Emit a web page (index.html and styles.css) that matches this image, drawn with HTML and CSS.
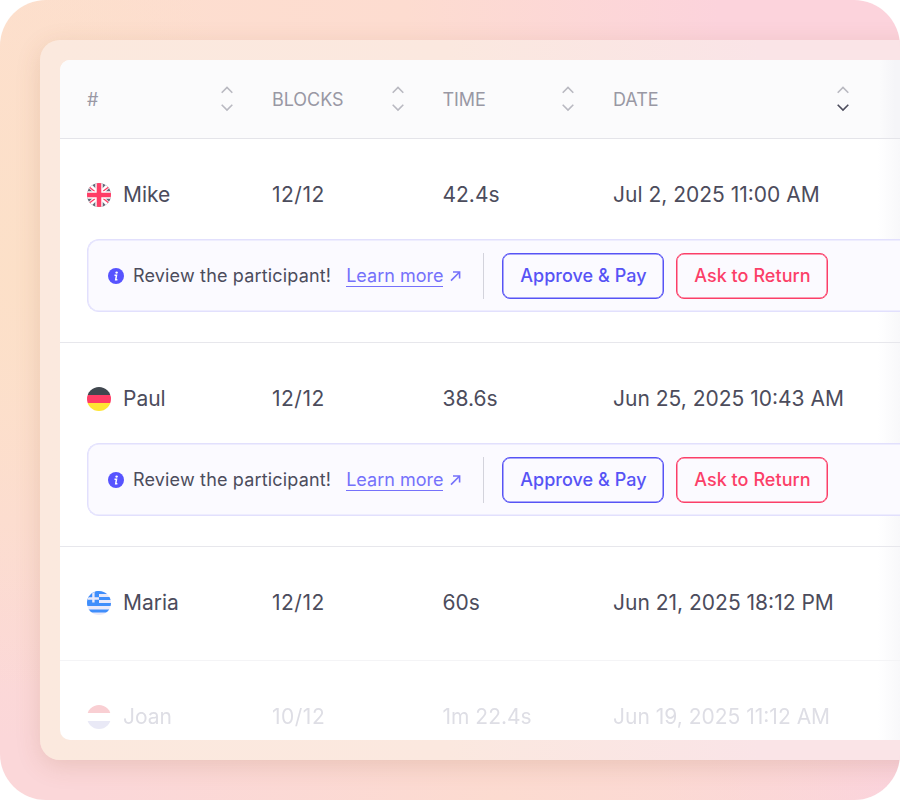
FILE: index.html
```
<!DOCTYPE html>
<html lang="en">
  <head>
    <meta charset="UTF-8" />
    <meta name="viewport" content="width=device-width, initial-scale=1.0" />
    <title>Participants</title>
    <link rel="stylesheet" href="styles.css">
  </head>
  <body>
    <svg class="defs" width="0" height="0" aria-hidden="true">
      <symbol id="info" viewBox="0 0 16 16">
        <circle cx="8" cy="8" r="8" fill="#5753ff"/>
        <circle cx="8.6" cy="4.6" r="1.2" fill="#fff"/>
        <path d="M6.5 7.3H8.5L7.7 11.8H9.4" fill="none" stroke="#fff" stroke-width="1.5"/>
      </symbol>
      <symbol id="arrow" viewBox="0 0 12 12">
        <path d="M1 10.6 9.4 2.2M3 2H9.6V8.6" fill="none" stroke="#7571fb" stroke-width="1.6"/>
      </symbol>
      <clipPath id="round"><circle cx="12" cy="12" r="12"/></clipPath>
    </svg>

    <main class="scene">
      <div class="frame">
        <div class="table">
          <div class="grid head">
            <div class="th">#
              <svg class="sort" viewBox="0 0 14 26"><path d="M1.7 6.7 7 1.4 12.3 6.7"/><path class="down" d="M1.7 18.7 7 24 12.3 18.7"/></svg>
            </div>
            <div class="th">BLOCKS
              <svg class="sort" viewBox="0 0 14 26"><path d="M1.7 6.7 7 1.4 12.3 6.7"/><path class="down" d="M1.7 18.7 7 24 12.3 18.7"/></svg>
            </div>
            <div class="th">TIME
              <svg class="sort" viewBox="0 0 14 26"><path d="M1.7 6.7 7 1.4 12.3 6.7"/><path class="down" d="M1.7 18.7 7 24 12.3 18.7"/></svg>
            </div>
            <div class="th">DATE
              <svg class="sort desc" viewBox="0 0 14 26"><path d="M1.7 6.7 7 1.4 12.3 6.7"/><path class="down" d="M1.7 18.7 7 24 12.3 18.7"/></svg>
            </div>
          </div>

          <section class="row">
            <div class="grid">
              <div class="name">
                <svg class="flag" viewBox="0 0 24 24"><g clip-path="url(#round)">
                  <path fill="#666879" d="M0 0h24v24H0z"/>
                  <path stroke="#fff" stroke-width="4.6" d="M0 0 24 24M24 0 0 24"/>
                  <path stroke="#ff3d66" stroke-width="1.3" d="M1 3 9 9.5M15 9 23 3M1 21 9 15M15 14.5 23 21"/>
                  <path stroke="#fff" stroke-width="7.4" d="M12 0V24M0 12H24"/>
                  <path stroke="#ff3d66" stroke-width="4.6" d="M12 0V24M0 12H24"/>
                </g></svg>
                Mike
              </div>
              <div class="blocks">12/12</div>
              <div>42.4s</div>
              <div>Jul 2, 2025 11:00 AM</div>
            </div>
            <div class="review">
              <svg class="info"><use href="#info"/></svg>
              <span class="message">Review the participant!</span>
              <a class="learn" href="#">Learn more</a>
              <svg class="arrow"><use href="#arrow"/></svg>
              <div class="actions">
                <button class="approve">Approve &amp; Pay</button>
                <button class="return">Ask to Return</button>
              </div>
            </div>
          </section>

          <section class="row">
            <div class="grid">
              <div class="name">
                <svg class="flag" viewBox="0 0 24 24"><g clip-path="url(#round)">
                  <path fill="#40474f" d="M0 0h24v8H0z"/>
                  <path fill="#ff3d66" d="M0 8h24v8H0z"/>
                  <path fill="#ffe633" d="M0 16h24v8H0z"/>
                </g></svg>
                Paul
              </div>
              <div class="blocks">12/12</div>
              <div>38.6s</div>
              <div>Jun 25, 2025 10:43 AM</div>
            </div>
            <div class="review">
              <svg class="info"><use href="#info"/></svg>
              <span class="message">Review the participant!</span>
              <a class="learn" href="#">Learn more</a>
              <svg class="arrow"><use href="#arrow"/></svg>
              <div class="actions">
                <button class="approve">Approve &amp; Pay</button>
                <button class="return">Ask to Return</button>
              </div>
            </div>
          </section>

          <section class="row short">
            <div class="grid">
              <div class="name">
                <svg class="flag" viewBox="0 0 24 24"><g clip-path="url(#round)">
                  <path fill="#e9e9fa" d="M0 0h24v24H0z"/>
                  <path stroke="#3f8efb" stroke-width="3" d="M0 1.5H24M0 7.5H24M0 13.5H24M0 20H24"/>
                  <path fill="#3f8efb" d="M0 0h12v12H0z"/>
                  <path stroke="#e9e9fa" stroke-width="2.4" d="M6.4 0V11.5M0 7.5H12"/>
                </g></svg>
                Maria
              </div>
              <div class="blocks">12/12</div>
              <div>60s</div>
              <div>Jun 21, 2025 18:12 PM</div>
            </div>
          </section>

          <section class="row faded">
            <div class="grid">
              <div class="name">
                <svg class="flag" viewBox="0 0 24 24"><g clip-path="url(#round)">
                  <path fill="#f9cfd3" d="M0 0h24v8H0z"/>
                  <path fill="#e9e9f6" d="M0 16h24v8H0z"/>
                </g></svg>
                Joan
              </div>
              <div class="blocks">10/12</div>
              <div>1m 22.4s</div>
              <div>Jun 19, 2025 11:12 AM</div>
            </div>
          </section>
        </div>
      </div>
    </main>
  </body>
</html>
```
FILE: styles.css
```
* {
  box-sizing: border-box;
}

body {
  margin: 0;
  background: #fff;
  font-family: Inter, sans-serif;
  color: #4c4c5c;
}

.defs {
  position: absolute;
}

.scene {
  height: 800px;
  padding: 40px 0 40px 40px;
  overflow: hidden;
  border-radius: 46px;
  background:
    radial-gradient(ellipse 240px 420px at 20px 270px, #fce0c8 0, rgba(252,224,200,0) 100%),
    radial-gradient(ellipse 420px 200px at 500px 800px, #fcdbd0 0, rgba(252,219,208,0) 100%),
    linear-gradient(90deg, #fddfcf 0, #fddcd0 45%, #fcd3dc 80%) 0 0 / 100% 300px no-repeat,
    linear-gradient(90deg, rgba(251,211,221,0) 70%, #fbd3dd),
    linear-gradient(#fddfcf 300px, #fbd7d9 740px);
}

.frame {
  width: 900px;
  height: 720px;
  padding: 20px;
  border-radius: 20px;
  background: linear-gradient(90deg, #fbe9de 0, #fbe8df 45%, #fae4e7 80%);
  box-shadow: 0 6px 24px rgba(150, 90, 50, .17);
}

.table {
  height: 680px;
  overflow: hidden;
  border-radius: 10px;
  background: linear-gradient(90deg, #fff 818px, #f8f8fa 840px);
}

.grid {
  display: grid;
  grid-template-columns: 185px 170.5px 170.5px 1fr;
  align-items: center;
  padding-left: 27px;
}

.head {
  height: 79px;
  background: linear-gradient(90deg, #fbfbfc 820px, #f5f5f8 835px);
  border-bottom: 1px solid #e4e4e9;
  font-size: 18px;
  font-weight: 370;
  letter-spacing: -.05px;
  color: #9998a4;
}

.th {
  display: flex;
  align-items: center;
  justify-content: space-between;
  padding-right: 38px;
}
.th:last-child {
  padding-right: 70px;
}

.sort {
  width: 14px;
  height: 26px;
  fill: none;
  stroke: #b9b9c1;
  stroke-width: 1.6;
}
.desc .down {
  stroke: #4c4c5c;
}

.row {
  height: 204px;
  padding-top: 39px;
  border-bottom: 1px solid #e7e7ec;
  font-size: 21px;
  font-weight: 380;
}
.row .grid {
  height: 33px;
}
.row.short {
  height: 114px;
  border-color: #f4f4f6;
}

.name {
  display: flex;
  align-items: center;
  gap: 12px;
}

.blocks {
  letter-spacing: .5px;
}

.flag {
  width: 24px;
  height: 24px;
}

.review {
  display: flex;
  align-items: center;
  height: 73px;
  margin: 28px 0 0 27px;
  padding-left: 19px;
  background: #fbfaff;
  border: 1px solid #e2e0fd;
  border-right: 0;
  border-radius: 12px 0 0 12px;
  box-shadow: inset 0 0 0 .5px #e2e0fd;
  font-size: 18px;
  font-weight: 400;
}

.info {
  width: 16px;
  height: 16px;
  margin: 0 9px 0 1px;
}

.message {
  letter-spacing: .17px;
}

.learn {
  margin: 1px 0 0 15px;
  color: #7571fb;
  line-height: 21px;
  text-decoration: none;
  border-bottom: 1px solid #7571fb;
}

.arrow {
  width: 12px;
  height: 12px;
  margin-left: 7px;
}

.actions {
  display: flex;
  gap: 12px;
  margin-left: 21px;
  padding-left: 18px;
  border-left: 1px solid #d3d3dc;
}

button {
  height: 46px;
  padding: 0;
  background: none;
  border: 1px solid;
  border-radius: 8px;
  box-shadow: inset 0 0 0 .5px;
  font: 460 18px Inter, sans-serif;
  letter-spacing: .05px;
}

.approve {
  width: 162px;
  color: #5753f5;
}

.return {
  width: 152px;
  color: #fb3f68;
}

.faded {
  border: 0;
  font-weight: 430;
  color: #dedee5;
  filter: blur(.7px);
}
```
